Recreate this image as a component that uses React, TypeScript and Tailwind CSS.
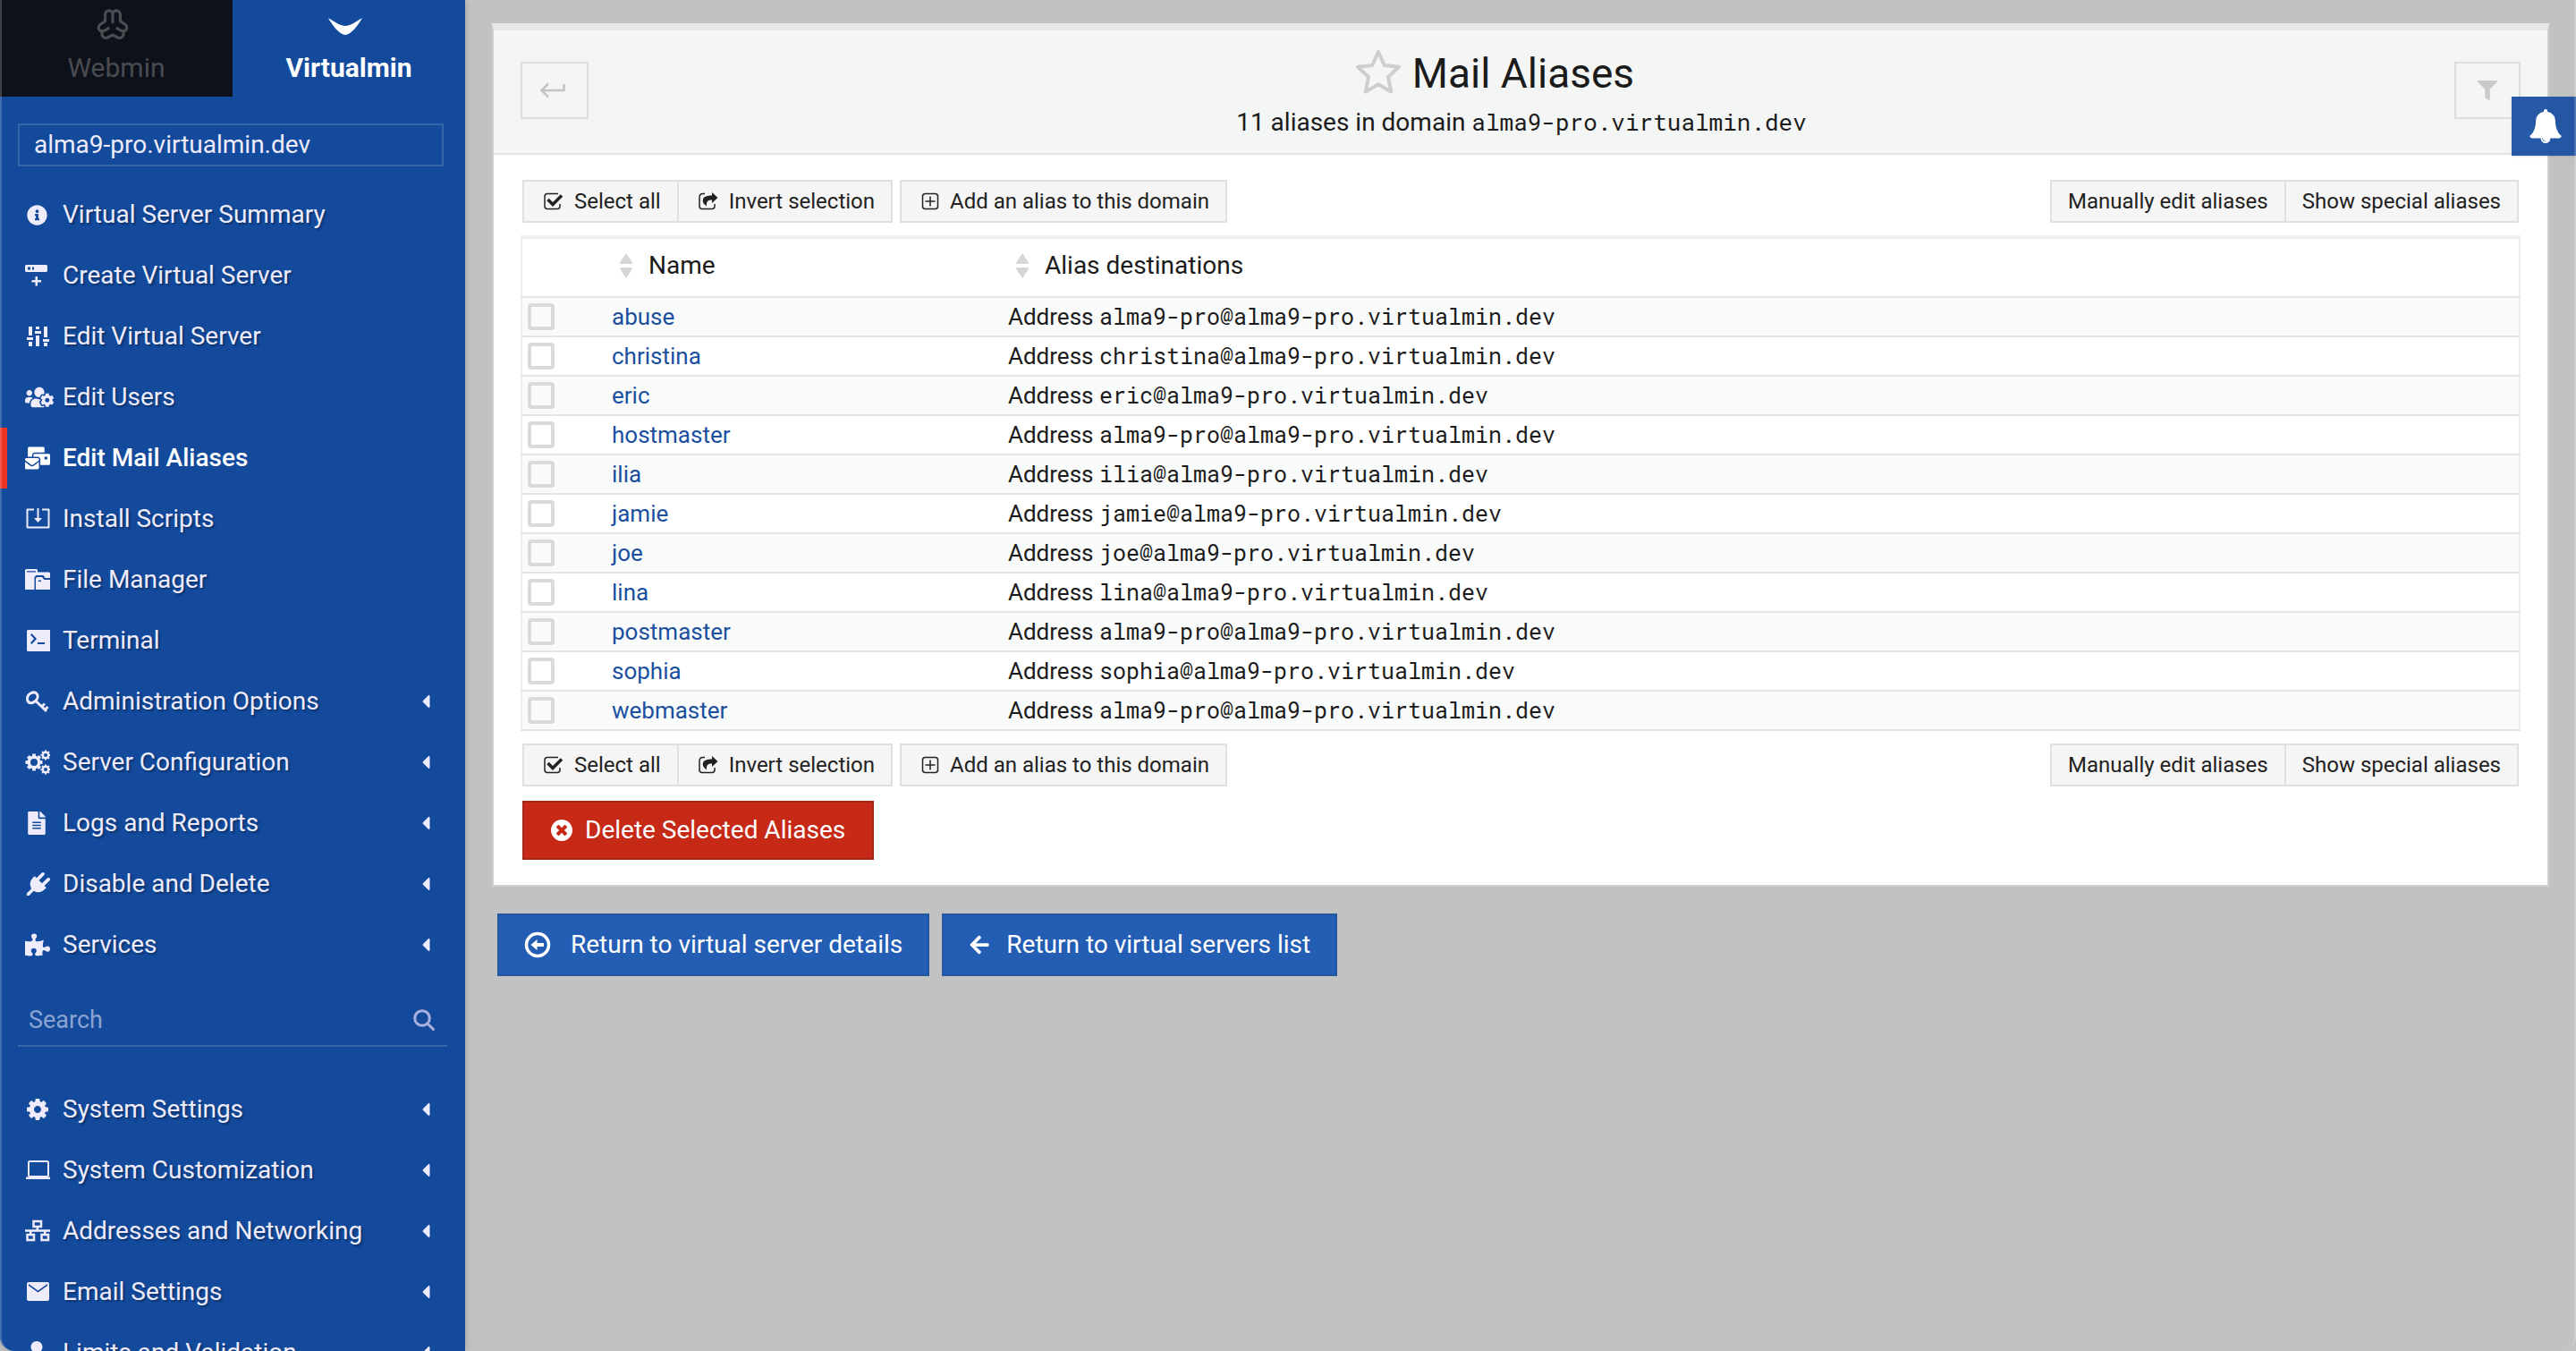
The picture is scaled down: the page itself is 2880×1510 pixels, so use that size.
import React, { useState } from "react";
import {
  FaInfoCircle,
  FaUsersCog,
  FaMailBulk,
  FaFileAlt,
  FaPuzzlePiece,
  FaFilter,
  FaArrowLeft,
  FaCaretLeft,
  FaUser,
} from "react-icons/fa";

function Svg({ children, className = "h-7 w-7 shrink-0", box = "0 0 28 28" }: { children: React.ReactNode; className?: string; box?: string }) {
  return (
    <svg viewBox={box} className={className} fill="currentColor" aria-hidden="true">
      {children}
    </svg>
  );
}

const ServerPlus = () => (
  <Svg>
    <path fillRule="evenodd" d="M1.5 2h22A1.5 1.5 0 0 1 25 3.500v5A1.500 1.500 0 0 1 23.500 10h-22A1.500 1.500 0 0 1 0 8.500v-5A1.500 1.500 0 0 1 1.500 2ZM3 4.500v3h3v-3Zm5 0v3h2v-3Z" />
    <path d="M11.500 15h2.500v4h4v2.500h-4v4h-2.500v-4h-4V19h4Z" />
  </Svg>
);

const Sliders = () => (
  <Svg>
    <path d="M4 3h4v10H4zM2 15h7v3H2zM4 20h4v5H4zM12 3h4v3h-4zM11 8h7v3h-7zM12 13h4v12h-4zM21 3h4v12h-4zM20 17h7v3h-7zM21 21h4v4h-4z" />
  </Svg>
);

const Install = () => (
  <Svg>
    <path d="M10 3.500H2.500v20h24v-20H19" fill="none" stroke="currentColor" strokeWidth="2" strokeLinejoin="round" />
    <path d="M13.500 2h2v11h3.500l-4.500 5-4.500-5h3.500Z" />
  </Svg>
);

const Folder = () => (
  <Svg>
    <path d="M0 25V3.500A1.500 1.500 0 0 1 1.500 2h11A1.500 1.500 0 0 1 14 3.500V5.500h12.500A1.500 1.500 0 0 1 28 7v5h-5.500l-2-3h-8L10.500 11v14ZM2 4.200v1.300h10V4.200Z" fillRule="evenodd" />
    <path d="M12 25V13q0-2 2-2h5l2.500 3H28v11Zm3-9h3v-1.500h-3Z" fillRule="evenodd" />
  </Svg>
);

const TerminalIcon = () => (
  <Svg>
    <path fillRule="evenodd" d="M3.500 2h24a1.500 1.500 0 0 1 1.500 1.500v21A1.500 1.500 0 0 1 27.500 26h-24A1.500 1.500 0 0 1 2 24.500v-21A1.500 1.500 0 0 1 3.500 2ZM6 7.500 10 12l-4 4.500 1.500 1.500L13 12 7.500 6ZM14 16v2h8v-2Z" />
  </Svg>
);

const KeyIcon = () => (
  <Svg>
    <g fill="none" stroke="currentColor">
      <path d="M3 13.500c-1.500-3 0-7 3-8.500s6-1.500 7.500 1 0 6-2.500 8-6.500 2.500-8-.500Z" strokeWidth="3" />
      <path d="m11.500 13 12.500 12M19 19.500l3-3M22.500 23l3-3" strokeWidth="3" />
    </g>
  </Svg>
);

function Gear({ cx, cy, r, hole, teeth = 8 }: { cx: number; cy: number; r: number; hole: number; teeth?: number }) {
  return (
    <g transform={`translate(${cx} ${cy})`}>
      <circle r={(r * 0.78 + hole) / 2} fill="none" stroke="currentColor" strokeWidth={r * 0.78 - hole} />
      {Array.from({ length: teeth }, (_, i) => (
        <rect key={i} x={-r * 0.2} y={-r} width={r * 0.4} height={r * 0.35} transform={`rotate(${(360 / teeth) * i})`} />
      ))}
    </g>
  );
}

const Gears = () => (
  <Svg>
    <Gear cx={10} cy={14} r={9.5} hole={4} />
    <Gear cx={23} cy={6} r={5.5} hole={2} />
    <Gear cx={23} cy={22} r={5.5} hole={2} />
  </Svg>
);

const Cog = () => (
  <Svg box="0 0 1792 1792">
    <path d="M1152 896q0-106-75-181t-181-75-181 75-75 181 75 181 181 75 181-75 75-181zm512-109v222q0 12-8 23t-20 13l-185 28q-19 54-39 91 35 50 107 138 10 12 10 25t-9 23q-27 37-99 108t-94 71q-12 0-26-9l-138-108q-44 23-91 38-16 136-29 186-7 28-36 28h-222q-14 0-24.500-8.500t-11.500-21.500l-28-184q-49-16-90-37l-141 107q-10 9-25 9-14 0-25-11-126-114-165-168-7-10-7-23 0-12 8-23 15-21 51-66.500t54-70.500q-27-50-41-99l-183-27q-13-2-21-12.500t-8-23.500v-222q0-12 8-23t19-13l186-28q14-46 39-92-40-57-107-138-10-12-10-24 0-10 9-23 26-36 98.500-107.500t94.500-71.500q13 0 26 10l138 107q44-23 91-38 16-136 29-186 7-28 36-28h222q14 0 24.500 8.500t11.500 21.500l28 184q49 16 90 37l142-107q9-9 24-9 13 0 25 10 129 119 165 170 7 8 7 22 0 12-8 23-15 21-51 66.500t-54 70.500q26 50 41 98l183 28q13 2 21 12.500t8 23.500z" />
  </Svg>
);

const Plug = () => (
  <Svg box="-128 0 1920 1792">
    <path d="M1755 453q37 38 37 90.500t-37 90.500l-401 400 150 150-160 160q-163 163-389.500 186.500t-411.500-100.500l-362 362h-181v-181l362-362q-124-185-100.500-411.500t186.500-389.500l160-160 150 150 400-401q38-37 91-37t90 37 37 90.500-37 90.500l-400 401 234 234 401-400q38-37 91-37t90 37z" />
  </Svg>
);

const Bell = () => (
  <Svg box="0 0 1792 1792" className="h-[38px] w-[38px]">
    <path d="M912 1696q0-16-16-16-59 0-101.500-42.500t-42.500-101.500q0-16-16-16t-16 16q0 73 51.500 124.500t124.500 51.500q16 0 16-16zm816-288q0 52-38 90t-90 38h-448q0 106-75 181t-181 75-181-75-75-181h-448q-52 0-90-38t-38-90q50-42 91-88t85-119.500 74.500-158.500 50-206 19.500-260q0-152 117-282.500t307-158.500q-8-19-8-39 0-40 28-68t68-28 68 28 28 68q0 20-8 39 190 28 307 158.500t117 282.500q0 139 19.500 260t50 206 74.500 158.500 85 119.500 91 88z" />
  </Svg>
);

const CircleTimes = () => (
  <Svg box="128 128 1536 1536" className="h-6 w-6">
    <path d="M1277 1122q0-26-19-45l-181-181 181-181q19-19 19-45 0-27-19-46l-90-90q-19-19-46-19-26 0-45 19l-181 181-181-181q-19-19-45-19-27 0-46 19l-90 90q-19 19-19 46 0 26 19 45l181 181-181 181q-19 19-19 45 0 27 19 46l90 90q19 19 46 19 26 0 45-19l181-181 181 181q19 19 45 19 27 0 46-19l90-90q19-19 19-46zm387-226q0 209-103 385.500t-279.500 279.500-385.500 103-385.500-103-279.500-279.500-103-385.500 103-385.500 279.500-279.500 385.500-103 385.500 103 279.500 279.500 103 385.500z" />
  </Svg>
);

const Laptop = () => (
  <Svg>
    <rect x="4" y="4" width="22" height="17" rx="1.5" fill="none" stroke="currentColor" strokeWidth="2" />
    <path d="M1 21.500h27.500V24H1z" />
  </Svg>
);

const Network = () => (
  <Svg>
    <g fill="none" stroke="currentColor" strokeWidth="2.5">
      <path d="M9.500 3h8.500v6H9.500zM2.500 18h7.500v6H2.500zM18.500 18h7.500v6h-7.500zM0 13.500h28M13.800 9v4.500M6.200 13.500V18M22.200 13.500V18" />
    </g>
  </Svg>
);

const Mail = () => (
  <Svg>
    <path fillRule="evenodd" d="M4 3h21a2 2 0 0 1 2 2v17a2 2 0 0 1-2 2H4a2 2 0 0 1-2-2V5a2 2 0 0 1 2-2Zm0 4 10.500 7.500L25 7V5l-10.500 7.500L4 5Z" />
  </Svg>
);

const Webmin = () => (
  <svg viewBox="0 0 34 34" className="h-9 w-9" fill="none" stroke="currentColor" strokeWidth="3" strokeLinecap="round" strokeLinejoin="round" aria-hidden="true">
    <path d="M17 14V5.500C17 .5 9 .5 9 6v7l-4.500 3c-5 3-1.500 9.500 3.500 7l4.500-2.500M17 5.500C17 .5 25 .5 25 6v7l4.500 3c5 3 1.500 9.500-3.500 7L21.500 20.500M6 23c-1.500 5 1 8.500 5 7.500l6-3 6 3c4 1 6.500-2.500 5-7.500" />
  </svg>
);

const Virtualmin = () => (
  <svg viewBox="0 0 38 20" className="h-5 w-[38px]" fill="currentColor" aria-hidden="true">
    <path d="M0 0c8 5 14 9 19 9s11-4 19-9C33 9 25 19 19 19S5 9 0 0Z" />
  </svg>
);

const CheckSquare = () => (
  <svg viewBox="0 0 22 20" className="h-5 w-[22px]" fill="none" stroke="currentColor" aria-hidden="true">
    <path d="M16 1.500H4Q1 1.500 1 4.500v11Q1 18.500 4 18.500h11q3 0 3-3V13" strokeWidth="1.5" />
    <path d="m4.500 8 5.500 5.500L20 3.500" strokeWidth="3.500" />
  </svg>
);

const ShareSquare = () => (
  <svg viewBox="0 0 22 20" className="h-5 w-[22px]" aria-hidden="true">
    <path d="M7 1.500H5Q1 1.500 1 5.500v10Q1 18.500 4 18.500h11q3 0 3-3V13" fill="none" stroke="currentColor" strokeWidth="1.5" />
    <path d="M15 0l6.500 6L15 12V8.500c-4.500 0-6.500 1.500-6 7C5.500 13 4 10.500 5 7.500 6 4.500 10 3.500 15 3.500Z" fill="currentColor" />
  </svg>
);

const PlusSquare = () => (
  <svg viewBox="0 0 20 20" className="h-5 w-5" fill="none" stroke="currentColor" strokeWidth="1.5" aria-hidden="true">
    <rect x="1.5" y="1.5" width="17" height="17" rx="3" />
    <path d="M10 4.500v11M4.500 10h11" />
  </svg>
);

const CircleLeft = () => (
  <svg viewBox="0 0 30 30" className="h-[30px] w-[30px]" aria-hidden="true">
    <circle cx="15" cy="15" r="12.5" fill="none" stroke="currentColor" strokeWidth="3.5" />
    <path d="M7.500 15l7-6v4H22v4h-7.500v4Z" fill="currentColor" />
  </svg>
);

const ReturnArrow = () => (
  <svg viewBox="0 0 28 20" className="h-5 w-7" fill="none" stroke="currentColor" strokeWidth="2.5" aria-hidden="true">
    <path d="M26.500 3v7H2M9 2.500 1.500 10 9 17.500" />
  </svg>
);

const Star = () => (
  <svg viewBox="0 0 52 50" className="h-[50px] w-[52px]" fill="none" stroke="currentColor" strokeWidth="4" strokeLinejoin="round" aria-hidden="true">
    <path d="M26 3l6.800 15 16.200 1.800L37 31l3.200 16.500L26 39.200l-14.200 8.300L15 31 3 19.800 19.200 18Z" />
  </svg>
);

const Magnifier = () => (
  <svg viewBox="0 0 24 24" className="h-6 w-6" fill="none" stroke="currentColor" strokeWidth="3" strokeLinecap="round" aria-hidden="true">
    <circle cx="10" cy="10" r="8.3" />
    <path d="m16.500 16.500 6 6" />
  </svg>
);

const SortArrows = () => (
  <svg viewBox="0 0 14 28" className="h-7 w-3.5" fill="#d6d6d6" aria-hidden="true">
    <path d="M7 0l7 10.500q0 1.500-1 1.500H1q-1 0-1-1.500ZM7 28l7-10.500q0-1.500-1-1.500H1q-1 0-1 1.500Z" />
  </svg>
);

type Item = { label: string; icon: React.ReactNode; sub?: boolean; active?: boolean };

const serverItems: Item[] = [
  { label: "Virtual Server Summary", icon: <FaInfoCircle className="ml-0.5 h-[23px] w-[23px]" /> },
  { label: "Create Virtual Server", icon: <ServerPlus /> },
  { label: "Edit Virtual Server", icon: <Sliders /> },
  { label: "Edit Users", icon: <FaUsersCog className="h-[26px] w-8 shrink-0" /> },
  { label: "Edit Mail Aliases", icon: <FaMailBulk className="h-7 w-7" />, active: true },
  { label: "Install Scripts", icon: <Install /> },
  { label: "File Manager", icon: <Folder /> },
  { label: "Terminal", icon: <TerminalIcon /> },
  { label: "Administration Options", icon: <KeyIcon />, sub: true },
  { label: "Server Configuration", icon: <Gears />, sub: true },
  { label: "Logs and Reports", icon: <FaFileAlt className="h-[26px] w-[26px]" />, sub: true },
  { label: "Disable and Delete", icon: <Plug />, sub: true },
  { label: "Services", icon: <FaPuzzlePiece className="h-7 w-7" />, sub: true },
];

const systemItems: Item[] = [
  { label: "System Settings", icon: <Cog />, sub: true },
  { label: "System Customization", icon: <Laptop />, sub: true },
  { label: "Addresses and Networking", icon: <Network />, sub: true },
  { label: "Email Settings", icon: <Mail />, sub: true },
  { label: "Limits and Validation", icon: <FaUser className="h-[26px] w-[26px]" />, sub: true },
];

function Menu({ items }: { items: Item[] }) {
  return (
    <ul>
      {items.map((it) => (
        <li key={it.label}>
          <a
            href="#"
            className={
              it.active
                ? "flex h-[68px] items-center border-l-8 border-[#f03323] pr-9 pl-5 font-medium text-white"
                : "flex h-[68px] items-center pr-9 pl-7 text-[#eeebfb] [text-shadow:2px_2px_2px_rgba(0,0,0,0.3)]"
            }
          >
            <span className="flex w-[42px] shrink-0 items-center">{it.icon}</span>
            <span className="grow whitespace-nowrap">{it.label}</span>
            {it.sub && <FaCaretLeft className="h-6 w-4 shrink-0" />}
          </a>
        </li>
      ))}
    </ul>
  );
}

const aliases = [
  ["abuse", "alma9-pro"],
  ["christina", "christina"],
  ["eric", "eric"],
  ["hostmaster", "alma9-pro"],
  ["ilia", "ilia"],
  ["jamie", "jamie"],
  ["joe", "joe"],
  ["lina", "lina"],
  ["postmaster", "alma9-pro"],
  ["sophia", "sophia"],
  ["webmaster", "alma9-pro"],
];

const toolButton = "flex h-12 items-center gap-3 border-2 border-[#e0e0e0] bg-[#f5f5f5] pr-[18px] text-[24px] whitespace-nowrap text-[#222]";

function Toolbar({ onAll, onInvert }: { onAll: () => void; onInvert: () => void }) {
  return (
    <div className="flex items-center justify-between px-0.5">
      <div className="flex gap-2">
        <div className="flex">
          <button type="button" onClick={onAll} className={toolButton + " pl-[22px]"}>
            <CheckSquare />
            Select all
          </button>
          <button type="button" onClick={onInvert} className={toolButton + " -ml-0.5 pl-[22px]"}>
            <ShareSquare />
            Invert selection
          </button>
        </div>
        <button type="button" className={toolButton + " pl-[22px]"}>
          <PlusSquare />
          Add an alias to this domain
        </button>
      </div>
      <div className="flex">
        <button type="button" className={toolButton + " pl-[18px]"}>Manually edit aliases</button>
        <button type="button" className={toolButton + " -ml-0.5 pl-[18px]"}>Show special aliases</button>
      </div>
    </div>
  );
}

export default function App() {
  const [checked, setChecked] = useState<boolean[]>(aliases.map(() => false));
  const all = () => setChecked(aliases.map(() => true));
  const invert = () => setChecked((c) => c.map((v) => !v));

  return (
    <div className="flex h-screen overflow-hidden bg-[#c1c3c2] font-[Roboto,sans-serif] text-[28px] text-[#1b1b1b]">
      <aside className="w-[520px] shrink-0 overflow-hidden rounded-bl-2xl bg-[#134a9c] shadow-[0_0_8px_rgba(0,0,0,0.2)]">
        <nav className="flex h-[108px] text-[30px] leading-[40px]">
          <a href="#" className="flex w-1/2 flex-col items-center bg-[#0d1119] pt-2.5 text-[#4a4c50]">
            <span className="pr-2">
              <Webmin />
            </span>
            <span className="mt-2.5">Webmin</span>
          </a>
          <a href="#" className="flex w-1/2 flex-col items-center pt-5 font-bold text-white">
            <span className="pr-2">
              <Virtualmin />
            </span>
            <span className="mt-4">Virtualmin</span>
          </a>
        </nav>
        <div className="mt-[30px] mr-6 mb-5 ml-5">
          <input
            aria-label="Domain"
            defaultValue="alma9-pro.virtualmin.dev"
            className="block h-12 w-full border-2 border-white/15 bg-transparent px-4 pb-0.5 text-[28px] text-[#eeebfb] outline-none"
          />
        </div>
        <Menu items={serverItems} />
        <div className="mt-[22px] mr-5 mb-9 ml-5 flex h-[58px] items-center border-b-2 border-white/15 pr-3.5 pl-3">
          <input aria-label="Search" placeholder="Search" className="min-w-0 grow bg-transparent text-[27px] outline-none placeholder:text-[#8ba3cf]" />
          <button type="button" aria-label="Search" className="text-[#a9b0e0]">
            <Magnifier />
          </button>
        </div>
        <Menu items={systemItems} />
      </aside>

      <main className="min-w-0 grow pt-[26px] pr-[30px] pl-[30px]">
        <section className="border-x-2 border-t-8 border-b-2 border-x-[#d0d0d0] border-t-[#e7e7e7] border-b-[#d0d0d0] bg-white">
          <header className="flex items-start justify-between border-b-2 border-[#e4e4e4] bg-[#f4f6f5] px-[30px] pb-4">
            <button type="button" aria-label="Go back" className="mt-[35px] flex h-16 w-[76px] items-center justify-center border-2 border-[#dcdedd] pr-1 text-[#c4c4c4]">
              <ReturnArrow />
            </button>
            <div className="flex flex-col items-center pt-[18px]">
              <h1 className="-ml-[60px] flex items-center gap-3 text-[46px] leading-[60px]">
                <span className="-mt-1 text-[#cecece]">
                  <Star />
                </span>
                Mail Aliases
              </h1>
              <p className="h-[43px] leading-[48px]">
                11 aliases in domain <code className="font-['Roboto_Mono','DejaVu_Sans_Mono',monospace] text-[26px]">alma9-pro.virtualmin.dev</code>
              </p>
            </div>
            <button type="button" aria-label="Filter" className="mt-[35px] flex h-16 w-[74px] items-center justify-center border-2 border-[#dcdedd] text-[#c9c9c9]">
              <FaFilter className="h-[22px] w-[22px]" />
            </button>
          </header>

          <div className="px-[30px] pt-7 pb-7">
            <Toolbar onAll={all} onInvert={invert} />
            <table className="mt-3.5 mb-3.5 w-full table-fixed border-collapse border-2 border-t-4 border-[#eeeeee] text-left">
              <colgroup>
                <col className="w-[94px]" />
                <col className="w-[443px]" />
                <col />
              </colgroup>
              <thead>
                <tr className="h-[67px] border-b-2 border-[#e4e4e4]">
                  <th aria-label="Select" />
                  <th className="pb-1 pl-4 font-normal">
                    <span className="flex items-center gap-[18px]">
                      <SortArrows />
                      Name
                    </span>
                  </th>
                  <th className="pb-1 pl-4 font-normal">
                    <span className="flex items-center gap-[18px]">
                      <SortArrows />
                      Alias destinations
                    </span>
                  </th>
                </tr>
              </thead>
              <tbody className="text-[26px]">
                {aliases.map(([name, to], i) => (
                  <tr key={name} className="h-11 border-b-2 border-[#e3e4e4] odd:bg-[#f9fafa]">
                    <td className="pl-1.5">
                      <input
                        type="checkbox"
                        aria-label={"Select " + name}
                        checked={checked[i]}
                        onChange={() => setChecked((c) => c.map((v, j) => (j === i ? !v : v)))}
                        className="block h-[30px] w-[30px] appearance-none rounded border-4 border-[#dadada] bg-transparent checked:bg-[#235cb4]"
                      />
                    </td>
                    <td className="leading-[42px]">
                      <a href="#" className="pl-[7px] text-[#1b4f9f]">{name}</a>
                    </td>
                    <td className="pl-[7px] leading-[42px] whitespace-nowrap">
                      Address <code className="font-['Roboto_Mono','DejaVu_Sans_Mono',monospace] text-[25px]">{to}@alma9-pro.virtualmin.dev</code>
                    </td>
                  </tr>
                ))}
              </tbody>
            </table>
            <Toolbar onAll={all} onInvert={invert} />
            <button type="button" className="mt-4 ml-0.5 flex h-[66px] items-center gap-3.5 border-2 border-[#a72618] bg-[#c62a17] px-[30px] text-[28px] text-white">
              <CircleTimes />
              Delete Selected Aliases
            </button>
          </div>
        </section>
        <div className="mt-[30px] ml-1.5 flex gap-3.5 text-[28px] text-white">
          <a href="#" className="flex h-[70px] items-center gap-[22px] border-2 border-[#2457a0] bg-[#245eb4] px-7">
            <CircleLeft />
            Return to virtual server details
          </a>
          <a href="#" className="flex h-[70px] items-center gap-[18px] border-2 border-[#2457a0] bg-[#245eb4] px-7">
            <FaArrowLeft className="h-6 w-6" />
            Return to virtual servers list
          </a>
        </div>
      </main>

      <button type="button" aria-label="Notifications" className="absolute top-[108px] right-0 flex h-[66px] w-[72px] items-center justify-center bg-[#1b50a1]/95 pl-1 text-white shadow">
        <Bell />
      </button>
      <div className="pointer-events-none absolute inset-0 rounded-b-2xl border-x-2 border-white/20" />
    </div>
  );
}
